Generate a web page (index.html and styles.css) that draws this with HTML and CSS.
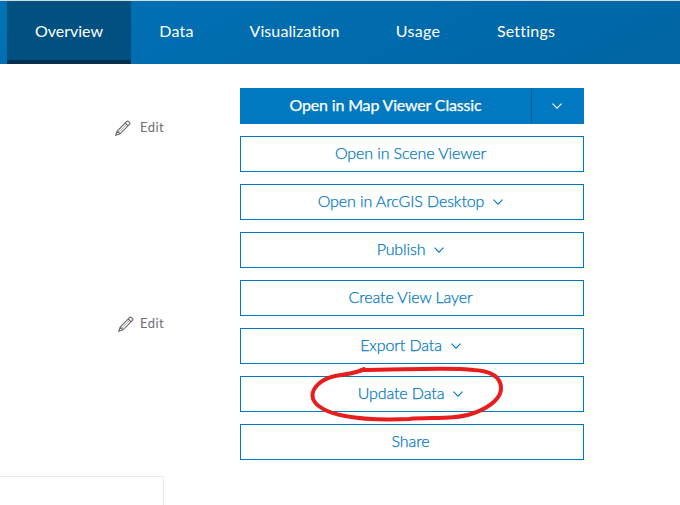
FILE: index.html
```html
<!DOCTYPE html>
<html lang="en">
<head>
<meta charset="utf-8">
<title>Overview</title>
<link rel="stylesheet" href="styles.css">
</head>
<body>
<svg class="defs" aria-hidden="true">
  <symbol id="chevron" viewBox="0 0 10 6"><path d="M.5 .6 5 5.2 9.5 .6" fill="none" stroke="currentColor" stroke-width="1.1"/></symbol>
  <symbol id="pencil" viewBox="0 0 16 16"><path d="M.8 15.2 2.2 11 11.600 1.600Q12.600 .6 13.600 1.600L14.400 2.400Q15.400 3.400 14.400 4.400L5 13.800ZM2.2 11 5 13.800M10.200 3 13 5.800" fill="none" stroke="currentColor" stroke-width="1.2"/><path d="M3.800 12.200 11.500 4.500" stroke="currentColor" stroke-width=".5"/></symbol>
</svg>
<nav class="tabs">
  <a class="tab tab-overview active"><span>Overview</span></a>
  <a class="tab tab-data"><span>Data</span></a>
  <a class="tab tab-visualization"><span>Visualization</span></a>
  <a class="tab tab-usage"><span>Usage</span></a>
  <a class="tab tab-settings"><span>Settings</span></a>
</nav>
<main class="content">
  <section class="details">
    <a class="edit"><svg><use href="#pencil"/></svg><span>Edit</span></a>
    <a class="edit edit-description"><svg><use href="#pencil"/></svg><span>Edit</span></a>
    <div class="panel"></div>
  </section>
  <aside class="actions">
    <div class="split">
      <button class="button primary"><span>Open in Map Viewer Classic</span></button>
      <button class="button primary toggle" aria-label="More"><svg class="chevron"><use href="#chevron"/></svg></button>
    </div>
    <button class="button"><span>Open in Scene Viewer</span></button>
    <button class="button"><span>Open in ArcGIS Desktop</span><svg class="chevron"><use href="#chevron"/></svg></button>
    <button class="button"><span>Publish</span><svg class="chevron"><use href="#chevron"/></svg></button>
    <button class="button"><span>Create View Layer</span></button>
    <button class="button"><span>Export Data</span><svg class="chevron"><use href="#chevron"/></svg></button>
    <div class="marked">
      <button class="button"><span>Update Data</span><svg class="chevron"><use href="#chevron"/></svg></button>
      <svg class="circle" viewBox="300 355 215 75"><path d="M364 369C358 373 346 374 335 376C321 379 312 388 312.500 396C313 406 328 413 345 416C366 420 387 420 409 419C431 417 454 420 474 413C491 407 502 397 501 387C500 376 490 371 474 370C449 367 401 370 361 370" fill="none" stroke="#e81e1e" stroke-width="4" stroke-linecap="round" stroke-linejoin="round"/></svg>
    </div>
    <button class="button"><span>Share</span></button>
  </aside>
</main>
</body>
</html>
```
FILE: styles.css
```css
* { box-sizing: border-box; }
body {
  margin: 0;
  height: 505px;
  overflow: hidden;
  background: #fff;
  font-family: Lato, "Open Sans", sans-serif;
  font-size: 16px;
}
.defs { display: none; }
.tabs {
  display: flex;
  height: 64px;
  padding-left: 7px;
  border-top: 1px solid #d5dde0;
  background: linear-gradient(155deg, #0072b5 0%, #006aac 60%, #0065a2 100%);
  color: #fff;
}
.tab {
  display: flex;
  justify-content: center;
  height: 63px;
  line-height: 20px;
  padding-top: 20px;
}
.tab-overview { width: 124px; letter-spacing: 0; }
.tab-data { width: 91px; letter-spacing: .2px; }
.tab-visualization { width: 145px; letter-spacing: .1px; }
.tab-usage { width: 102px; letter-spacing: .3px; }
.tab-settings { width: 114px; letter-spacing: .2px; }
.active { background: #005180; border-bottom: 4px solid #002f4f; }
.content { display: flex; height: 441px; }
.details {
  width: 164px;
  display: flex;
  flex-direction: column;
  align-items: flex-end;
  padding-top: 56px;
}
.edit {
  display: flex;
  gap: 9px;
  height: 16px;
  line-height: 15px;
  font-size: 13px;
  letter-spacing: .4px;
  color: #6e6e6e;
}
.edit svg { width: 16px; height: 16px; }
.edit-description { margin-top: 180px; gap: 6px; }
.panel {
  width: 164px;
  height: 40px;
  margin-top: 144px;
  border-top: 1px solid #eaeaea;
  border-right: 1px solid #eaeaea;
}
.actions {
  width: 344px;
  margin: 24px 0 0 76px;
  display: flex;
  flex-direction: column;
  gap: 12px;
}
.button {
  display: flex;
  align-items: center;
  justify-content: center;
  gap: 9px;
  width: 100%;
  height: 36px;
  margin: 0;
  padding: 0 3px 3px 0;
  border: 1px solid #0079c1;
  background: #fff;
  color: #0079c1;
  font: inherit;
  font-weight: 300;
  letter-spacing: -.1px;
  -webkit-text-stroke: .25px currentColor;
  white-space: nowrap;
}
.chevron { width: 10px; height: 6px; margin-top: 3px; }
.split { display: flex; }
.primary {
  padding-right: 0;
  background: #0079c1;
  color: #fff;
  font-weight: 400;
  letter-spacing: -.17px;
}
.split .toggle { width: 53px; flex: none; padding-right: 2px; border-left-color: #005e95; }
.marked { position: relative; }
.circle {
  position: absolute;
  left: 60px;
  top: -21px;
  width: 215px;
  height: 75px;
  pointer-events: none;
}
```
